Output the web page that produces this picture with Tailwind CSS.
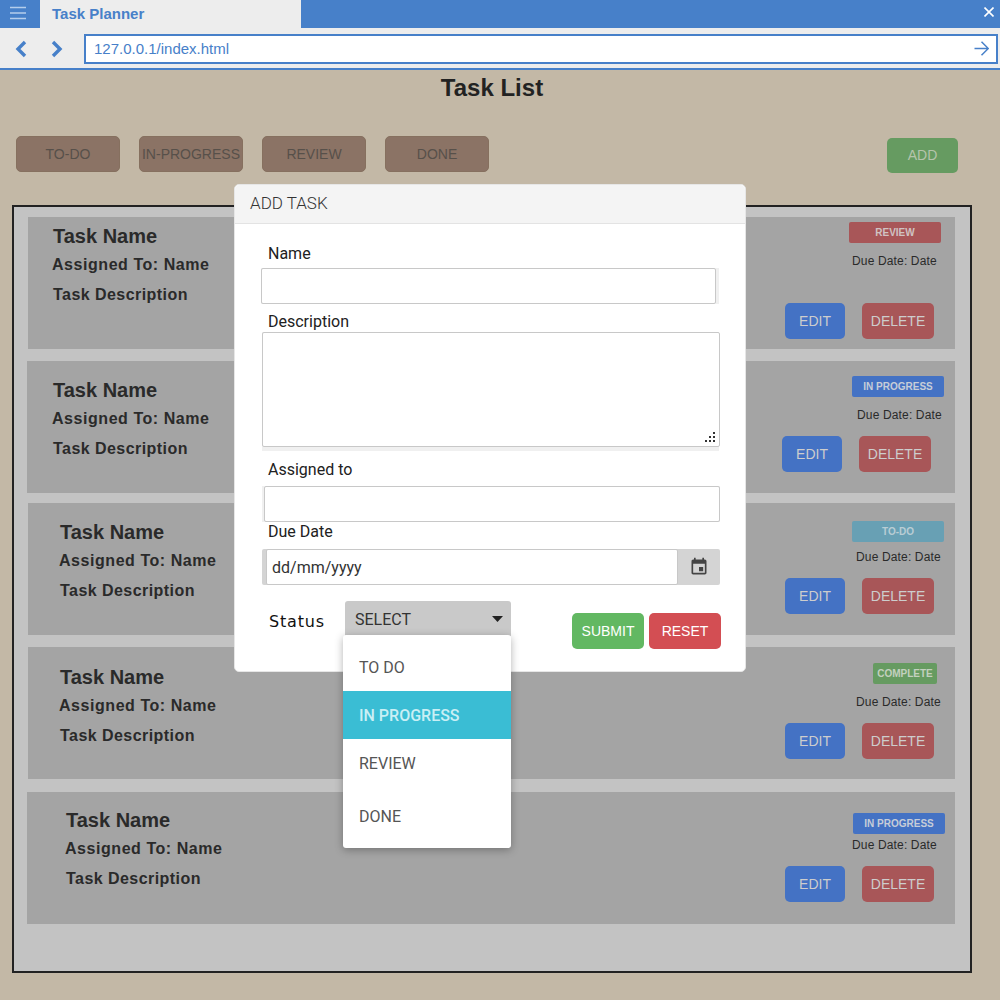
<!DOCTYPE html>
<html lang="en">
<head>
    <meta charset="UTF-8">
    <title>Task Planner</title>
    <script src="https://cdn.jsdelivr.net/npm/@tailwindcss/browser@4"></script>
</head>
<body class="font-['Liberation_Sans',sans-serif]">
<div class="relative w-[1000px] h-[1000px] overflow-hidden bg-[#c3b8a6]">

    <!-- browser chrome -->
    <div class="flex h-[28px] bg-[#4780c9]">
        <div class="w-[40px] flex items-center pl-[9px] pb-[3px]">
            <svg width="18" height="14" viewBox="0 0 18 14" fill="none" stroke="#b5cdec" stroke-width="1.4"><path d="M1 1.5h16M1 7h16M1 12.5h16"/></svg>
        </div>
        <div class="w-[261px] bg-[#ededed] pl-[12px] text-[15px] leading-[28px] font-bold text-[#4780c9]">Task Planner</div>
        <div class="ml-auto mr-[6px] flex items-center pb-[4px]">
            <svg width="10" height="10" viewBox="0 0 10 10" fill="none" stroke="#fff" stroke-width="1.6"><path d="M0.500 0.500l9 9M9.500 0.500l-9 9"/></svg>
        </div>
    </div>
    <div class="flex items-center h-[40px] bg-[#ededed]">
        <svg class="ml-[15px] mt-[2px]" width="12" height="18" viewBox="0 0 12 18" fill="none" stroke="#4780c9" stroke-width="3.400"><path d="M10 2L3 9l7 7"/></svg>
        <svg class="ml-[24px] mt-[2px]" width="12" height="18" viewBox="0 0 12 18" fill="none" stroke="#4780c9" stroke-width="3.400"><path d="M2 2l7 7-7 7"/></svg>
        <div class="ml-[21px] mt-[2px] w-[914px] h-[30px] border-2 border-[#4780c9] bg-white flex items-center pl-[8px] pr-[7px] text-[15px] text-[#4780c9]">
            <span class="pt-[1px]">127.0.0.1/index.html</span>
            <svg class="ml-auto mb-[2px]" width="15" height="15" viewBox="0 0 15 15" fill="none" stroke="#4780c9" stroke-width="1.5"><path d="M0.500 7.500h14M7.500 0.800l6.800 6.700-6.800 6.700"/></svg>
        </div>
    </div>
    <div class="h-[2px] bg-[#4780c9]"></div>

    <h1 class="mt-[3px] ml-[-16px] text-center text-[24px] leading-[30px] font-bold text-[#222]">Task List</h1>

    <div class="flex items-start mt-[33px] ml-[16px] text-[14px] text-[#57504a]">
        <div class="w-[104px] h-[36px] mr-[19px] flex items-center justify-center rounded-[5px] border border-[#86705f] bg-[#8b7365]">TO-DO</div>
        <div class="w-[104px] h-[36px] mr-[19px] flex items-center justify-center rounded-[5px] border border-[#86705f] bg-[#8b7365]">IN-PROGRESS</div>
        <div class="w-[104px] h-[36px] mr-[19px] flex items-center justify-center rounded-[5px] border border-[#86705f] bg-[#8b7365]">REVIEW</div>
        <div class="w-[104px] h-[36px] flex items-center justify-center rounded-[5px] border border-[#86705f] bg-[#8b7365]">DONE</div>
        <div class="ml-[398px] mt-[2px] w-[71px] h-[35px] flex items-center justify-center rounded-[5px] bg-[#669b61] text-[#b5c4ac]">ADD</div>
    </div>

    <!-- task panel -->
    <div class="ml-[12px] mt-[32px] w-[960px] h-[768px] border-2 border-[#222] bg-[#c3c3c3] pt-[10px] text-[#2a2a2a]">

        <div class="flex w-[927px] h-[132px] ml-[14px] bg-[#a4a4a4]">
            <div class="pl-[25px] pt-[7px]">
                <div class="text-[20px] leading-[24px] font-bold">Task Name</div>
                <div class="ml-[-1px] mt-[7px] text-[16px] leading-[20px] font-bold tracking-[0.55px]">Assigned To: Name</div>
                <div class="mt-[10px] text-[16px] leading-[20px] font-bold tracking-[0.45px]">Task Description</div>
            </div>
            <div class="ml-auto w-[170px] pt-[5px]">
                <div class="ml-[64px] w-[92px] h-[21px] rounded-[2px] bg-[#a85658] flex items-center justify-center text-[10px] font-bold text-[#d0c3c3]">REVIEW</div>
                <div class="ml-[67px] mt-[10px] text-[12px] leading-[16px] tracking-[0.15px]">Due Date: Date</div>
                <div class="flex mt-[34px] text-[14px] text-[#cdcdcd]">
                    <div class="w-[60px] h-[36px] rounded-[5px] bg-[#4472c4] flex items-center justify-center">EDIT</div>
                    <div class="ml-[17px] w-[72px] h-[36px] rounded-[5px] bg-[#a85658] flex items-center justify-center">DELETE</div>
                </div>
            </div>
        </div>

        <div class="flex w-[928px] h-[132px] ml-[13px] mt-[12px] bg-[#a4a4a4]">
            <div class="pl-[26px] pt-[17px]">
                <div class="text-[20px] leading-[24px] font-bold">Task Name</div>
                <div class="ml-[-1px] mt-[7px] text-[16px] leading-[20px] font-bold tracking-[0.55px]">Assigned To: Name</div>
                <div class="mt-[10px] text-[16px] leading-[20px] font-bold tracking-[0.45px]">Task Description</div>
            </div>
            <div class="ml-auto w-[174px] pt-[15px]">
                <div class="ml-[71px] w-[92px] h-[21px] rounded-[2px] bg-[#4472c4] flex items-center justify-center text-[10px] font-bold text-[#c7cdd8]">IN PROGRESS</div>
                <div class="ml-[76px] mt-[10px] text-[12px] leading-[16px] tracking-[0.15px]">Due Date: Date</div>
                <div class="flex mt-[13px] text-[14px] text-[#cdcdcd]">
                    <div class="ml-[1px] w-[60px] h-[36px] rounded-[5px] bg-[#4472c4] flex items-center justify-center">EDIT</div>
                    <div class="ml-[17px] w-[72px] h-[36px] rounded-[5px] bg-[#a85658] flex items-center justify-center">DELETE</div>
                </div>
            </div>
        </div>

        <div class="flex w-[927px] h-[132px] ml-[14px] mt-[10px] bg-[#a4a4a4]">
            <div class="pl-[32px] pt-[17px]">
                <div class="text-[20px] leading-[24px] font-bold">Task Name</div>
                <div class="ml-[-1px] mt-[7px] text-[16px] leading-[20px] font-bold tracking-[0.55px]">Assigned To: Name</div>
                <div class="mt-[10px] text-[16px] leading-[20px] font-bold tracking-[0.45px]">Task Description</div>
            </div>
            <div class="ml-auto w-[170px] pt-[18px]">
                <div class="ml-[67px] w-[92px] h-[21px] rounded-[2px] bg-[#68a0b4] flex items-center justify-center text-[10px] font-bold text-[#b9cdd4]">TO-DO</div>
                <div class="ml-[71px] mt-[7px] text-[12px] leading-[16px] tracking-[0.15px]">Due Date: Date</div>
                <div class="flex mt-[13px] text-[14px] text-[#cdcdcd]">
                    <div class="w-[60px] h-[36px] rounded-[5px] bg-[#4472c4] flex items-center justify-center">EDIT</div>
                    <div class="ml-[17px] w-[72px] h-[36px] rounded-[5px] bg-[#a85658] flex items-center justify-center">DELETE</div>
                </div>
            </div>
        </div>

        <div class="flex w-[927px] h-[132px] ml-[14px] mt-[12px] bg-[#a4a4a4]">
            <div class="pl-[32px] pt-[18px]">
                <div class="text-[20px] leading-[24px] font-bold">Task Name</div>
                <div class="ml-[-1px] mt-[7px] text-[16px] leading-[20px] font-bold tracking-[0.55px]">Assigned To: Name</div>
                <div class="mt-[10px] text-[16px] leading-[20px] font-bold tracking-[0.45px]">Task Description</div>
            </div>
            <div class="ml-auto w-[170px] pt-[16px]">
                <div class="ml-[88px] w-[64px] h-[21px] rounded-[2px] bg-[#669b61] flex items-center justify-center text-[10px] font-bold text-[#c3d0bf]">COMPLETE</div>
                <div class="ml-[71px] mt-[10px] text-[12px] leading-[16px] tracking-[0.15px]">Due Date: Date</div>
                <div class="flex mt-[13px] text-[14px] text-[#cdcdcd]">
                    <div class="w-[60px] h-[36px] rounded-[5px] bg-[#4472c4] flex items-center justify-center">EDIT</div>
                    <div class="ml-[17px] w-[72px] h-[36px] rounded-[5px] bg-[#a85658] flex items-center justify-center">DELETE</div>
                </div>
            </div>
        </div>

        <div class="flex w-[928px] h-[132px] ml-[13px] mt-[13px] bg-[#a4a4a4]">
            <div class="pl-[39px] pt-[16px]">
                <div class="text-[20px] leading-[24px] font-bold">Task Name</div>
                <div class="ml-[-1px] mt-[7px] text-[16px] leading-[20px] font-bold tracking-[0.55px]">Assigned To: Name</div>
                <div class="mt-[10px] text-[16px] leading-[20px] font-bold tracking-[0.45px]">Task Description</div>
            </div>
            <div class="ml-auto w-[170px] pt-[21px]">
                <div class="ml-[68px] w-[92px] h-[21px] rounded-[2px] bg-[#4472c4] flex items-center justify-center text-[10px] font-bold text-[#c7cdd8]">IN PROGRESS</div>
                <div class="ml-[67px] mt-[3px] text-[12px] leading-[16px] tracking-[0.15px]">Due Date: Date</div>
                <div class="flex mt-[13px] text-[14px] text-[#cdcdcd]">
                    <div class="w-[60px] h-[36px] rounded-[5px] bg-[#4472c4] flex items-center justify-center">EDIT</div>
                    <div class="ml-[17px] w-[72px] h-[36px] rounded-[5px] bg-[#a85658] flex items-center justify-center">DELETE</div>
                </div>
            </div>
        </div>
    </div>

    <!-- add task modal -->
    <div class="absolute left-[234px] top-[184px] w-[512px] h-[488px] rounded-[5px] bg-white border border-[#e6e6e6] font-['Roboto',sans-serif] text-[16px] text-[#212121]">
        <div class="h-[39px] pl-[15px] bg-[#f4f4f4] border-b border-[#e3e3e3] rounded-t-[5px] text-[17px] leading-[36px] font-light text-[#333]">ADD TASK</div>

        <div class="ml-[33px] mt-[20px] leading-[20px]">Name</div>
        <div class="ml-[26px] mt-[4px] w-[458px] bg-[#f0f0f0]">
            <input type="text" class="block w-[455px] h-[36px] bg-white border border-[#c8c8c8] rounded-[2px]">
        </div>

        <div class="ml-[33px] mt-[8px] leading-[20px]">Description</div>
        <div class="relative ml-[27px] w-[457px] h-[119px] bg-[#f0f0f0]">
            <textarea class="block w-[458px] h-[115px] bg-white border border-[#c8c8c8] rounded-[2px] resize-none"></textarea>
            <svg class="absolute left-[443px] top-[100px]" width="11" height="11" viewBox="0 0 11 11" fill="#333"><path d="M8 0h2v2H8zM4 4h2v2H4zM8 4h2v2H8zM0 8h2v2H0zM4 8h2v2H4zM8 8h2v2H8z"/></svg>
        </div>

        <div class="ml-[33px] mt-[9px] leading-[20px]">Assigned to</div>
        <div class="ml-[27px] mt-[6px] w-[458px] pl-[2px] bg-[#f0f0f0]">
            <input type="text" class="block w-[456px] h-[36px] bg-white border border-[#c8c8c8] rounded-[2px]">
        </div>

        <div class="ml-[33px] leading-[20px]">Due Date</div>
        <div class="flex ml-[27px] mt-[7px] w-[458px] h-[36px] pl-[4px] bg-[#d4d4d4] rounded-[2px]">
            <input type="text" value="dd/mm/yyyy" class="w-[412px] h-[36px] pl-[5px] bg-white border border-[#c8c8c8] rounded-[2px] text-[#333]">
            <div class="flex-1 flex items-center justify-center">
                <svg width="20" height="20" viewBox="0 0 24 24" fill="#444"><path d="M17 12h-5v5h5v-5zM16 1v2H8V1H6v2H5c-1.110 0-1.990.9-1.990 2L3 19c0 1.100.89 2 2 2h14c1.100 0 2-.9 2-2V5c0-1.100-.9-2-2-2h-1V1h-2zm3 18H5V8h14v11z"/></svg>
            </div>
        </div>

        <div class="flex mt-[16px] ml-[34px]">
            <div class="w-[76px] pt-[11px] font-['DejaVu_Sans',sans-serif] text-[16px] leading-[20px] tracking-[0.8px] text-[#111]">Status</div>
            <div class="relative w-[166px] h-[35px] bg-[#c9c9c9] rounded-t-[3px] flex items-center pl-[10px] text-[#333]">
                <span class="pt-[2px]">SELECT</span>
                <svg class="ml-auto mr-[8px]" width="11" height="6" viewBox="0 0 11 6" fill="#222"><path d="M0 0h11L5.500 6z"/></svg>
                <div class="absolute left-[-2px] top-[34px] w-[168px] h-[213px] bg-white rounded-[3px] shadow-[0_2px_8px_rgba(0,0,0,0.3)] text-[#555]">
                    <div class="h-[56px] pl-[16px] pt-[10px] flex items-center">TO DO</div>
                    <div class="h-[48px] pl-[16px] pt-[2px] flex items-center bg-[#3abdd4] text-[#c9eff5] font-medium">IN PROGRESS</div>
                    <div class="h-[48px] pl-[16px] pt-[2px] flex items-center">REVIEW</div>
                    <div class="h-[58px] pl-[16px] pt-[2px] flex items-center">DONE</div>
                </div>
            </div>
            <div class="flex gap-[5px] ml-[61px] mt-[12px] font-['Liberation_Sans',sans-serif] text-[14px] text-white">
                <div class="w-[72px] h-[36px] pt-[1px] rounded-[5px] bg-[#62b862] flex items-center justify-center">SUBMIT</div>
                <div class="w-[72px] h-[36px] pt-[1px] rounded-[5px] bg-[#d34e53] flex items-center justify-center">RESET</div>
            </div>
        </div>
    </div>
</div>
</body>
</html>
